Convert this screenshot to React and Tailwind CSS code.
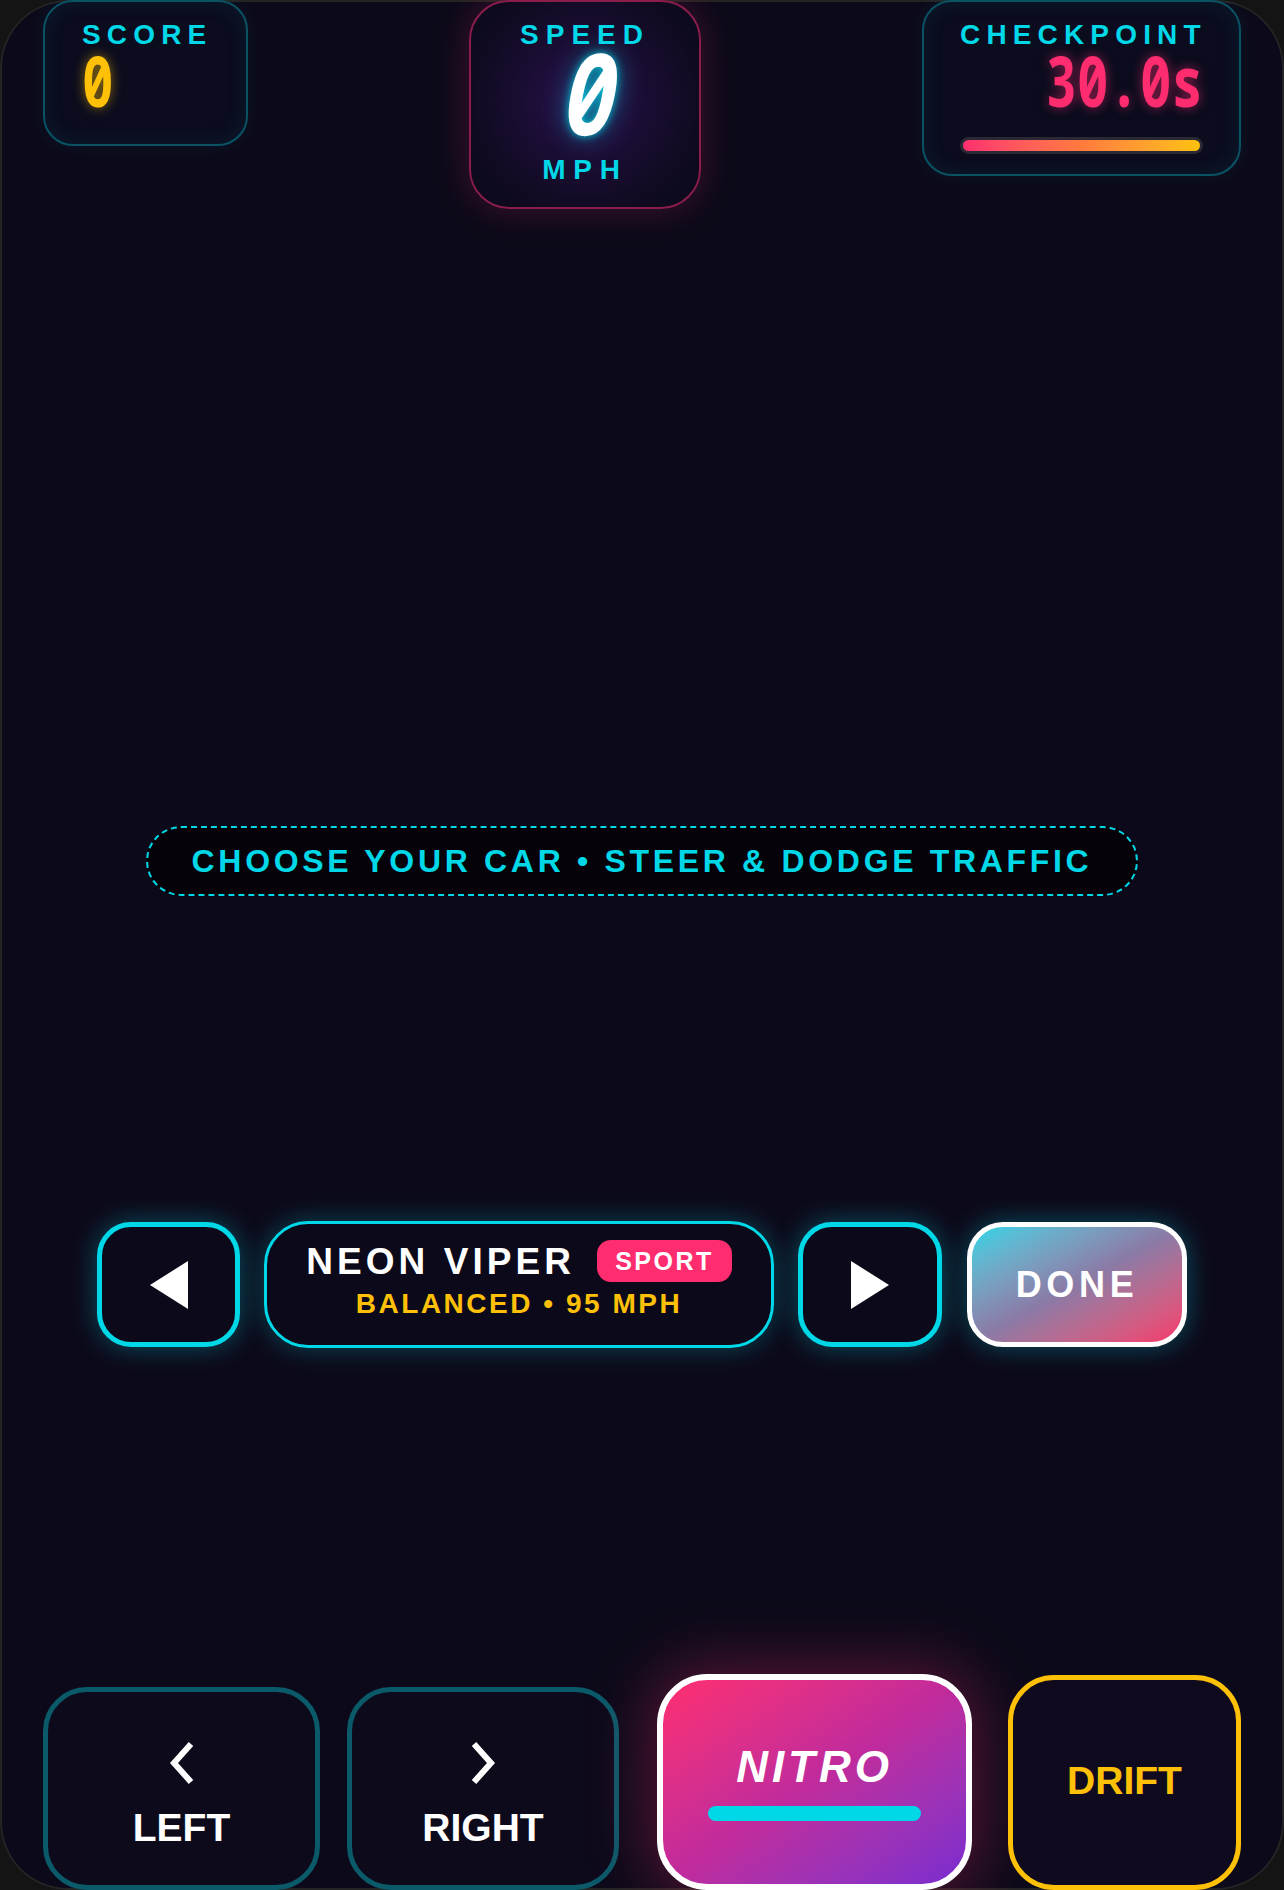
function TriangleLeft() {
  return (
    <svg width="38" height="48" viewBox="0 0 38 48">
      <polygon points="38,0 38,48 0,24" fill="#fff" />
    </svg>
  );
}

function TriangleRight() {
  return (
    <svg width="38" height="48" viewBox="0 0 38 48">
      <polygon points="0,0 0,48 38,24" fill="#fff" />
    </svg>
  );
}

function Chevron({ dir }) {
  return (
    <svg width="30" height="44" viewBox="0 0 30 44" fill="none">
      <path
        d={dir === "left" ? "M24 3 L7 22 L24 41" : "M6 3 L23 22 L6 41"}
        stroke="#fff"
        strokeWidth="6"
        strokeLinecap="butt"
        strokeLinejoin="miter"
      />
    </svg>
  );
}

export default function App() {
  return (
    <div className="min-h-screen bg-[#141414] font-['Liberation_Sans',Arial,sans-serif]">
      <div className="relative flex h-[1890px] w-[1284px] flex-col overflow-hidden rounded-[68px] bg-[#0c0a1a] shadow-[inset_0_0_0_2px_#242424]">
        {/* HUD */}
        <div className="flex items-start justify-between px-[43px]">
          <div className="flex h-[146px] w-[205px] flex-col rounded-[30px] border-2 border-[#0a5364] bg-[#0b0c1e] px-[37px] pt-[19px] shadow-[inset_0_0_22px_rgba(0,216,232,0.08),0_0_18px_rgba(0,216,232,0.06)]">
            <span className="text-[28px] font-bold leading-none tracking-[0.22em] text-[#00d8e8]">SCORE</span>
            <span className="-mt-[4px] inline-block origin-left scale-x-75 font-['Noto_Sans_Mono',monospace] text-[70px] font-bold leading-none text-[#ffc107] [text-shadow:0_0_14px_rgba(255,193,7,0.55)]">
              0
            </span>
          </div>

          <div className="flex h-[209px] w-[232px] flex-col items-center rounded-[40px] border-2 border-[#8a1d4c] bg-[radial-gradient(circle_at_50%_48%,#2a1150_0%,#1a0d33_40%,#0e0a1d_80%)] pt-[19px] shadow-[0_0_36px_rgba(255,45,111,0.22)]">
            <span className="text-[28px] font-bold leading-none tracking-[0.25em] text-[#00d8e8]">SPEED</span>
            <span className="-mt-[14px] inline-block scale-x-[0.78] font-['Noto_Sans_Mono',monospace] text-[113px] font-bold italic leading-none text-white [text-shadow:0_0_10px_rgba(0,216,232,0.9),0_0_30px_rgba(0,216,232,0.5)]">
              0
            </span>
            <span className="mt-[8px] text-[28px] font-bold leading-none tracking-[0.28em] text-[#00d8e8]">MPH</span>
          </div>

          <div className="flex h-[176px] w-[319px] flex-col rounded-[30px] border-2 border-[#0a5364] bg-[#0b0c1e] px-[36px] pt-[19px] shadow-[inset_0_0_22px_rgba(0,216,232,0.08),0_0_18px_rgba(0,216,232,0.06)]">
            <span className="text-[28px] font-bold leading-none tracking-[0.22em] text-[#00d8e8]">CHECKPOINT</span>
            <span className="-mt-[4px] inline-block origin-right scale-x-75 self-end font-['Noto_Sans_Mono',monospace] text-[70px] font-bold leading-none text-[#ff2d6f] [text-shadow:0_0_14px_rgba(255,45,111,0.55)]">
              30.0s
            </span>
            <div className="mt-[22px] h-[17px] w-full rounded-full bg-[#2a2834] p-[3px]">
              <div className="h-full w-full rounded-full bg-gradient-to-r from-[#ff2d6f] via-[#ff7a3d] to-[#ffc107]" />
            </div>
          </div>
        </div>

        {/* hint */}
        <div className="mt-[617px] flex justify-center">
          <div className="flex h-[70px] items-center rounded-full border-2 border-dashed border-[#00d8e8] bg-[#050309] px-[44px]">
            <span className="text-[32px] font-bold leading-none tracking-[0.115em] text-[#00d8e8]">
              CHOOSE YOUR CAR • STEER &amp; DODGE TRAFFIC
            </span>
          </div>
        </div>

        {/* car selector */}
        <div className="mt-[325px] flex items-center justify-center gap-[24px]">
          <button className="flex h-[125px] w-[143px] items-center justify-center rounded-[34px] border-[5px] border-[#00d8e8] bg-[#0c0a1a] shadow-[0_0_26px_rgba(0,216,232,0.35)]">
            <TriangleLeft />
          </button>

          <div className="flex h-[127px] w-[510px] flex-col items-center rounded-[44px] border-[3px] border-[#00d8e8] bg-[#0c0a1a] pt-[16px] shadow-[0_0_26px_rgba(0,216,232,0.3)]">
            <div className="flex items-center gap-[22px]">
              <span className="text-[37px] font-bold leading-none tracking-[0.11em] text-white">NEON VIPER</span>
              <span className="flex h-[42px] items-center rounded-[14px] bg-[#ff2d6f] px-[18px] text-[25px] font-bold leading-none tracking-[0.1em] text-white">
                SPORT
              </span>
            </div>
            <span className="mt-[8px] text-[28px] font-bold leading-none tracking-[0.09em] text-[#ffc107]">
              BALANCED • 95 MPH
            </span>
          </div>

          <button className="flex h-[125px] w-[144px] items-center justify-center rounded-[34px] border-[5px] border-[#00d8e8] bg-[#0c0a1a] shadow-[0_0_26px_rgba(0,216,232,0.35)]">
            <TriangleRight />
          </button>

          <button className="ml-px flex h-[125px] w-[220px] items-center justify-center rounded-[36px] border-[5px] border-white bg-gradient-to-br from-[#12d4e6] via-[#8a7aa6] to-[#f7336b] shadow-[0_0_26px_rgba(0,216,232,0.35)]">
            <span className="text-[36px] font-bold leading-none tracking-[0.13em] text-white">DONE</span>
          </button>
        </div>

        {/* controls */}
        <div className="mt-auto flex items-end px-[43px]">
          <button className="flex h-[203px] w-[277px] flex-col items-center rounded-[44px] border-[5px] border-[#0a5a6a] bg-[#0d0a1c] pt-[49px]">
            <Chevron dir="left" />
            <span className="mt-[23px] text-[39px] font-bold leading-none text-white">LEFT</span>
          </button>
          <button className="ml-[27px] flex h-[203px] w-[272px] flex-col items-center rounded-[44px] border-[5px] border-[#0a5a6a] bg-[#0d0a1c] pt-[49px]">
            <Chevron dir="right" />
            <span className="mt-[23px] text-[39px] font-bold leading-none text-white">RIGHT</span>
          </button>
          <button className="ml-[38px] flex h-[216px] w-[315px] flex-col items-center rounded-[50px] border-[6px] border-white bg-gradient-to-br from-[#ff2d6f] via-[#c02a9c] to-[#7a2ad0] pt-[65px] shadow-[0_0_60px_12px_rgba(255,45,111,0.28)]">
            <span className="text-[44px] font-bold italic leading-none tracking-[0.09em] text-white">NITRO</span>
            <div className="mt-[17px] h-[15px] w-[213px] rounded-full bg-[#00d8e8]" />
          </button>
          <button className="ml-[36px] flex h-[215px] w-[233px] items-center justify-center rounded-[46px] border-[5px] border-[#ffc107] bg-[#0f0a1e] pb-[4px]">
            <span className="text-[39px] font-bold leading-none text-[#ffc107]">DRIFT</span>
          </button>
        </div>
      </div>
    </div>
  );
}
